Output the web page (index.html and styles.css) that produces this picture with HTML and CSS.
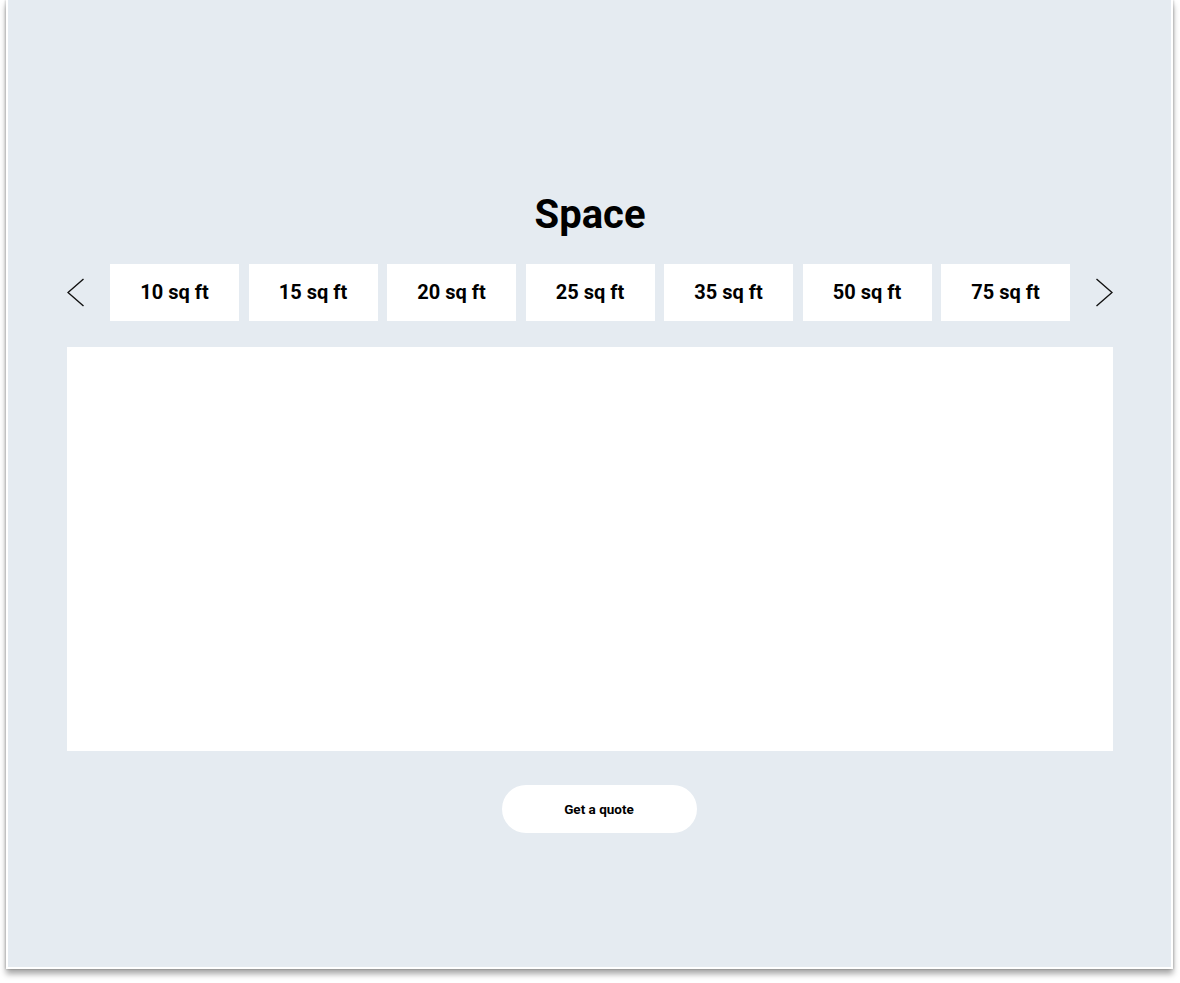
FILE: index.html
```html
<!DOCTYPE html>
<html>
<head>
<meta charset="utf-8">
<link rel="stylesheet" href="styles.css">
</head>
<body>
<div class="panel">
  <h1 class="title">Space</h1>
  <div class="tabs-row">
    <button class="arrow" aria-label="Previous">
      <svg width="18" height="29" viewBox="0 0 18 29"><path d="M16.5 1 L1 14.5 L16.5 28" fill="none" stroke="#111" stroke-width="1.4"/></svg>
    </button>
    <div class="tabs">
      <div class="tab">10 sq ft</div>
      <div class="tab">15 sq ft</div>
      <div class="tab">20 sq ft</div>
      <div class="tab">25 sq ft</div>
      <div class="tab">35 sq ft</div>
      <div class="tab">50 sq ft</div>
      <div class="tab">75 sq ft</div>
    </div>
    <button class="arrow" aria-label="Next">
      <svg width="18" height="29" viewBox="0 0 18 29"><path d="M1.5 1 L17 14.5 L1.5 28" fill="none" stroke="#111" stroke-width="1.4"/></svg>
    </button>
  </div>
  <div class="content-box"></div>
  <div class="cta-row">
    <button class="cta">Get a quote</button>
  </div>
</div>
</body>
</html>
```
FILE: styles.css
```css
html, body {
  margin: 0;
  padding: 0;
  background: #ffffff;
  font-family: Roboto, "Liberation Sans", Arial, sans-serif;
}
body {
  padding-bottom: 14px;
}
.panel {
  margin: 0 7px 0 6px;
  height: 969px;
  box-sizing: border-box;
  background: #e5ebf1;
  border: 2px solid #ffffff;
  border-top: none;
  box-shadow: 0 5px 6px rgba(0, 0, 0, 0.35), -1px 0 2px rgba(0,0,0,0.15), 1px 0 2px rgba(0,0,0,0.15);
  padding: 191px 58px 0 59px;
  display: flex;
  flex-direction: column;
}
.title {
  margin: 0;
  text-align: center;
  font-size: 40px;
  line-height: 48px;
  font-weight: 700;
  color: #000;
}
.tabs-row {
  margin-top: 25px;
  display: flex;
  align-items: center;
  justify-content: space-between;
  height: 57px;
}
.arrow {
  background: none;
  border: none;
  padding: 0;
  width: 18px;
  height: 29px;
  display: flex;
  cursor: pointer;
}
.tabs {
  display: flex;
  gap: 9.5px;
}
.tab {
  width: 129px;
  height: 57px;
  padding-bottom: 2px;
  box-sizing: border-box;
  background: #ffffff;
  display: flex;
  align-items: center;
  justify-content: center;
  font-size: 20px;
  font-weight: 700;
  color: #000;
}
.content-box {
  margin-top: 26px;
  height: 404px;
  background: #ffffff;
}
.cta-row {
  margin-top: 34px;
  display: flex;
  justify-content: center;
  padding-left: 18px;
}
.cta {
  width: 195px;
  height: 48px;
  border: none;
  border-radius: 24px;
  background: #ffffff;
  font-family: Roboto, "Liberation Sans", Arial, sans-serif;
  font-size: 13.5px;
  font-weight: 700;
  color: #000;
  cursor: pointer;
}
```
